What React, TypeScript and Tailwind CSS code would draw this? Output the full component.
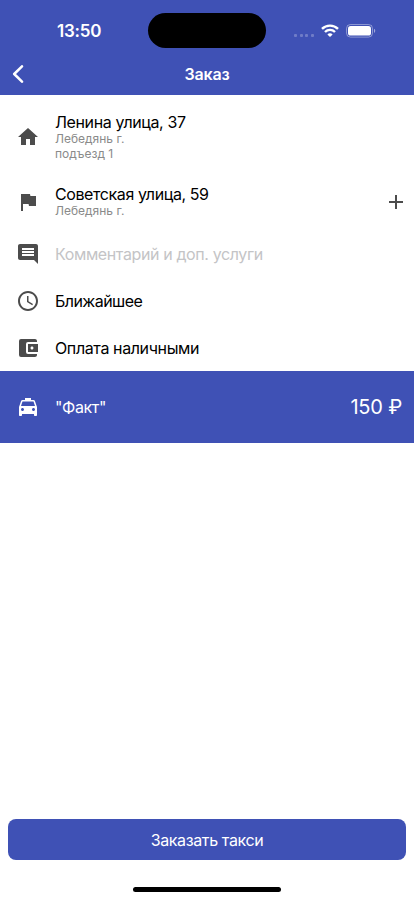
import React, { type ReactNode } from "react";
import {
  MdAccessTime,
  MdAccountBalanceWallet,
  MdAdd,
  MdComment,
  MdFlag,
  MdHome,
  MdLocalTaxi,
} from "react-icons/md";

interface OrderRowProps {
  icon: ReactNode;
  className: string;
  children: ReactNode;
  action?: ReactNode;
}

const OrderRow = ({ icon, className, children, action }: OrderRowProps) => (
  <div className={`flex items-center pr-1.5 pl-4 ${className}`}>
    <span className="w-[39px] shrink-0 text-[#4c4c4c]">{icon}</span>
    <div className="min-w-0 flex-1 whitespace-nowrap">{children}</div>
    {action}
  </div>
);

const StatusBar = () => (
  <div className="flex h-[61px] items-center">
    <div className="w-[148px] pl-[57px] text-[17px] leading-5 font-semibold tracking-[-0.2px]">
      13:50
    </div>
    <div className="h-[35px] w-[118px] rounded-full bg-black" />
    <div className="ml-[28px] flex items-center">
      <div className="mt-[9px] flex gap-[2.6px]">
        {[0, 1, 2, 3].map((dot) => (
          <span key={dot} className="size-[3px] rounded-[1px] bg-white/25" />
        ))}
      </div>
      <svg className="ml-[7px] h-[13px] w-[18px]" viewBox="0 0 18 13">
        <g fill="none" stroke="#fff" strokeWidth="2.4">
          <path d="M1 4.9C5.4.5 12.6.5 17 4.9" />
          <path d="M4 8C6.8 5.2 11.2 5.2 14 8" />
        </g>
        <path d="M6.4 10.4C7.8 8.9 10.2 8.9 11.6 10.4L9 13z" fill="#fff" />
      </svg>
      <svg className="ml-[7px] h-[14px] w-[30px]" viewBox="0 0 30 14">
        <rect
          x="0.5"
          y="0.5"
          width="26"
          height="12.6"
          rx="4"
          fill="none"
          stroke="#fff"
          strokeOpacity="0.4"
        />
        <rect x="2" y="2" width="23" height="9.6" rx="2.7" fill="#fff" />
        <path d="M28 4.7c1.7.7 1.7 3.5 0 4.2z" fill="#fff" fillOpacity="0.5" />
      </svg>
    </div>
  </div>
);

const App = () => {
  return (
    <div className="flex h-[900px] w-[414px] flex-col bg-white font-['Inter','Liberation_Sans',sans-serif] text-black">
      <header className="h-[94.5px] bg-[#3f51b5] text-white">
        <StatusBar />
        <div className="grid h-[26px] grid-cols-3 items-center">
          <svg className="ml-3 h-[18px] w-3" viewBox="0 0 12 18">
            <path
              d="M10 1.3 2.2 9l7.8 7.7"
              fill="none"
              stroke="#fff"
              strokeWidth="2.5"
              strokeLinecap="round"
              strokeLinejoin="round"
            />
          </svg>
          <h1 className="text-center text-base font-semibold tracking-[-0.2px]">
            Заказ
          </h1>
        </div>
      </header>

      <main className="pt-[5.5px]">
        <OrderRow className="h-[73px]" icon={<MdHome size={24} />}>
          <p className="text-base leading-5 tracking-[-0.38px]">
            Ленина улица, 37
          </p>
          <p className="text-xs leading-[14.5px] text-[#8a8a8a]">Лебедянь г.</p>
          <p className="text-xs leading-[14.5px] text-[#8a8a8a]">подъезд 1</p>
        </OrderRow>
        <OrderRow
          className="h-[57px]"
          icon={<MdFlag size={24} />}
          action={<MdAdd size={24} className="text-[#4c4c4c]" />}
        >
          <p className="text-base leading-5 tracking-[-0.4px]">
            Советская улица, 59
          </p>
          <p className="text-xs leading-[14.5px] text-[#8a8a8a]">Лебедянь г.</p>
        </OrderRow>
        <OrderRow className="h-[47px]" icon={<MdComment size={24} />}>
          <p className="text-base leading-5 tracking-[-0.38px] text-[#c4c4c6]">
            Комментарий и доп. услуги
          </p>
        </OrderRow>
        <OrderRow className="h-[47px]" icon={<MdAccessTime size={24} />}>
          <p className="text-base leading-5 tracking-[-0.55px]">Ближайшее</p>
        </OrderRow>
        <OrderRow
          className="h-[47px]"
          icon={<MdAccountBalanceWallet size={24} />}
        >
          <p className="text-base leading-5 tracking-[-0.38px]">
            Оплата наличными
          </p>
        </OrderRow>
        <div className="flex h-[71.5px] items-center bg-[#3f51b5] pr-3 pl-4 text-white">
          <MdLocalTaxi size={24} />
          <p className="ml-[15px] flex-1 text-base tracking-[-0.38px]">
            "Факт"
          </p>
          <p className="text-xl tracking-[-0.2px]">150 ₽</p>
        </div>
      </main>

      <footer className="mt-auto px-2 pb-2">
        <button className="h-[41px] w-full rounded-lg bg-[#3f51b5] text-base tracking-[-0.38px] text-white">
          Заказать такси
        </button>
        <div className="mx-auto mt-[27px] h-[5px] w-[148px] rounded-full bg-black" />
      </footer>
    </div>
  );
};

export default App;
